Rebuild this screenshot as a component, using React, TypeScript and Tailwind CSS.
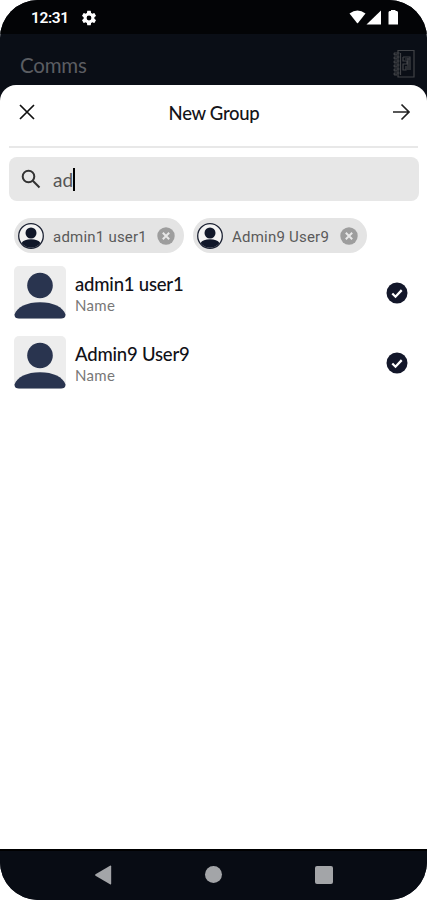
type User = { name: string; label: string };

const users: User[] = [
  { name: "admin1 user1", label: "Name" },
  { name: "Admin9 User9", label: "Name" },
];

function StatusBar() {
  return (
    <div className="flex h-[34px] items-center bg-[#030406] pl-[31px] pr-[28px] pt-0.5 text-white">
      <span className="w-[38px] whitespace-nowrap pt-px font-['Roboto',sans-serif] text-[15.5px] font-semibold leading-none tracking-[-0.4px]">
        12:31
      </span>
      <svg viewBox="0 0 24 24" className="ml-[11px] size-[18px]" fill="currentColor">
        <path d="M19.14 12.94c.04-.3.06-.61.06-.94 0-.32-.02-.64-.07-.94l2.03-1.58a.49.49 0 0 0 .12-.61l-1.92-3.32a.49.49 0 0 0-.59-.22l-2.39.96c-.5-.38-1.03-.7-1.62-.94l-.36-2.54a.48.48 0 0 0-.48-.41h-3.84c-.24 0-.43.17-.47.41l-.36 2.54c-.59.24-1.13.57-1.62.94l-2.39-.96a.48.48 0 0 0-.59.22L2.74 8.87c-.12.21-.08.47.12.61l2.03 1.58c-.05.3-.09.63-.09.94s.02.64.07.94l-2.03 1.58a.49.49 0 0 0-.12.61l1.92 3.32c.12.22.37.29.59.22l2.39-.96c.5.38 1.03.7 1.62.94l.36 2.54c.05.24.24.41.48.41h3.84c.24 0 .44-.17.47-.41l.36-2.54c.59-.24 1.13-.56 1.62-.94l2.39.96c.22.08.47 0 .59-.22l1.92-3.32a.48.48 0 0 0-.12-.61zM12 15.2a3.2 3.2 0 1 1 0-6.4 3.2 3.2 0 0 1 0 6.4z" />
      </svg>
      <svg viewBox="0 0 50 17" className="-mt-px ml-auto h-[17px] w-[50px]" fill="currentColor">
        <path d="M.5 4.5Q8.500-1.500 16.500 4.500L9 14Q8.500 14.600 8 14Z" />
        <path d="M32 1.500V15.500H17.500Z" />
        <path d="M39.500 3.500q0-1.200 1.200-1.500H42V1h4.500v1h1.300q1.200.3 1.200 1.500v12h-9.500Z" />
      </svg>
    </div>
  );
}

function NotebookIcon() {
  return (
    <svg viewBox="0 0 24 30" className="h-[30px] w-6" fill="none" stroke="#414347" strokeWidth="1.200">
      <path d="M6 1.500H22V28H6Z" />
      <path d="M8.500 4V26" />
      {[4, 8, 12, 16, 20, 24].map((y) => (
        <path key={y} d={`M7.500 ${y}H2.500a1.200 1.200 0 0 0 0 1.800H5`} />
      ))}
      <path d="M11 8h7v13M11 8v4h4v3h-4v6h3v-4M16 9v12M13 10h5" />
    </svg>
  );
}

function Person({ className }: { className: string }) {
  return (
    <svg viewBox="0 0 52 52" className={className} fill="currentColor">
      <circle cx="26" cy="19" r="12.800" />
      <path d="M0.500 48C3 40.500 13 35.700 26 35.700S49 40.500 51.500 48Q52 52 48 52H4Q0 52 .5 48Z" />
    </svg>
  );
}

function Chip({ name }: { name: string }) {
  return (
    <div className="flex h-[35px] items-center rounded-full bg-[#e4e4e4] pl-[3px] pr-[9px]">
      <svg viewBox="0 0 28 28" className="size-7">
        <circle cx="14" cy="14" r="12.300" fill="#f3f3f3" stroke="#1c2233" strokeWidth="1.300" />
        <circle cx="14" cy="11" r="5.500" fill="#101729" />
        <path d="M4.500 21C6 18.500 9.500 17.300 14 17.300S22 18.500 23.500 21A11.800 11.800 0 0 1 4.500 21Z" fill="#101729" />
      </svg>
      <span className="ml-2 whitespace-nowrap pt-0.5 font-['Roboto',sans-serif] text-[15px] leading-5 tracking-[0.22px] text-[#5a5a5a]">
        {name}
      </span>
      <svg viewBox="0 0 18 18" className="ml-auto size-[18px]">
        <circle cx="9" cy="9" r="8.700" fill="#9d9d9d" />
        <path d="M5.800 5.800l6.400 6.400M12.200 5.800l-6.400 6.400" stroke="#e8e8e8" strokeWidth="2" />
      </svg>
    </div>
  );
}

function UserRow({ user }: { user: User }) {
  return (
    <li className="flex h-[53px] items-center pl-3.5 pr-[19px]">
      <div className="h-[53px] w-[52px] overflow-hidden rounded-[5px] bg-[#ededed]">
        <Person className="h-[53px] w-[52px] text-[#29344f]" />
      </div>
      <div className="ml-[9px] flex-1 pt-0.5 font-['Lato',sans-serif]">
        <p className="text-[18.5px] font-medium leading-[22px] tracking-[-0.2px] text-[#111118]">{user.name}</p>
        <p className="text-[15px] leading-5 tracking-[0.3px] text-[#777]">{user.label}</p>
      </div>
      <svg viewBox="0 0 22 22" className="size-[22px]">
        <circle cx="11" cy="11" r="10.500" fill="#13172a" />
        <path d="M6.300 11.500l3.200 3.200 6.200-6.600" fill="none" stroke="white" strokeWidth="2.300" />
      </svg>
    </li>
  );
}

function NavBar() {
  return (
    <div className="h-[51px] border-t-2 border-black bg-[#080c14] text-[#a3a5a8]">
      <div className="flex h-[47px] items-center justify-between pl-[94px] pr-[94px]">
        <svg viewBox="0 0 18 20" className="h-5 w-[18px]" fill="currentColor">
          <path d="M16 .8q1.200-.6 1.200.8v16.800q0 1.400-1.200.8L1.500 10.800q-1-.8 0-1.600Z" />
        </svg>
        <div className="size-[17px] rounded-full bg-current" />
        <div className="size-[18px] rounded-[2px] bg-current" />
      </div>
    </div>
  );
}

export default function App() {
  return (
    <div className="h-[900px] w-[427px] bg-white">
      <div className="flex h-full flex-col overflow-hidden rounded-[38px] bg-[#0a0e16]">
        <StatusBar />
        <header className="flex h-[51px] items-center justify-between pl-5 pr-[11px] pt-2">
          <h1 className="pt-0.5 font-['Lato',sans-serif] text-[20.5px] leading-6 tracking-[-0.2px] text-[#5b5d62]">
            Comms
          </h1>
          <NotebookIcon />
        </header>

        <main className="flex flex-1 flex-col rounded-t-2xl bg-white">
          <div className="flex h-[61px] items-start justify-between pl-[18px] pr-4 pt-[18px]">
            <svg viewBox="0 0 18 18" className="size-[18px]" fill="none" stroke="#111" strokeWidth="1.700">
              <path d="M2 2l14 14M16 2L2 16" />
            </svg>
            <h2 className="-mt-0.5 font-['Lato',sans-serif] text-[18.5px] font-medium leading-6 tracking-[-0.3px] text-[#141419]">
              New Group
            </h2>
            <svg viewBox="0 0 19 18" className="h-[18px] w-[19px]" fill="none" stroke="#222" strokeWidth="1.700">
              <path d="M1 9h16M9.500 1.500L17 9l-7.500 7.500" />
            </svg>
          </div>
          <div className="mx-[9px] h-0.5 bg-[#e8e8e8]" />

          <div className="ml-[9px] mr-2 mt-[9px] flex h-[44px] items-center rounded-lg bg-[#e7e7e7] pl-3">
            <svg viewBox="0 0 20 20" className="size-5" fill="none" stroke="#333" strokeWidth="2">
              <circle cx="7.500" cy="7.500" r="5.800" />
              <path d="M11.800 11.800l6.700 6.700" />
            </svg>
            <span className="ml-3 pt-0.5 font-['Lato',sans-serif] text-[19px] leading-6 text-[#555]">ad</span>
            <div className="h-[23px] w-0.5 bg-black" />
          </div>

          <div className="mt-[17px] grid grid-cols-[170px_174px] gap-[9px] pl-3.5">
            {users.map((user) => (
              <Chip key={user.name} name={user.name} />
            ))}
          </div>

          <ul className="mt-[13px] flex flex-col gap-[17px]">
            {users.map((user) => (
              <UserRow key={user.name} user={user} />
            ))}
          </ul>
        </main>
        <NavBar />
      </div>
    </div>
  );
}
